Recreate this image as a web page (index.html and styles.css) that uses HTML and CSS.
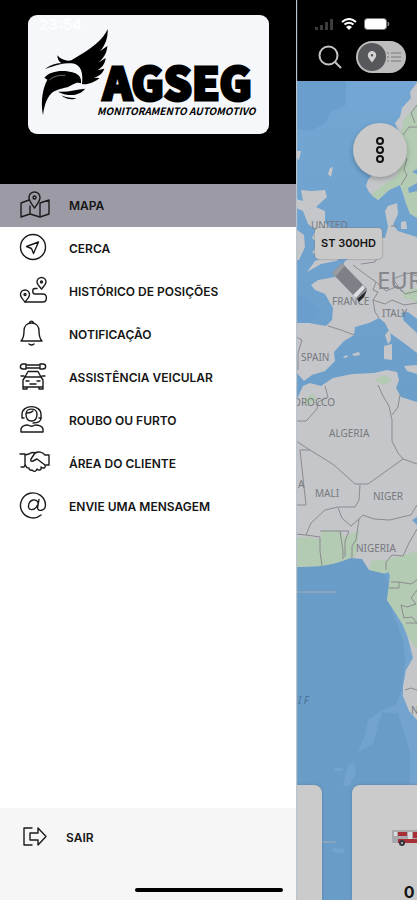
FILE: index.html
```html
<!DOCTYPE html>
<html lang="pt-BR">
<head>
    <meta charset="UTF-8">
    <meta name="viewport" content="width=device-width, initial-scale=1.0">
    <title>AGSEG Monitoramento Automotivo</title>
    <link rel="stylesheet" href="styles.css">
</head>
<body>
    <aside class="drawer">
        <header class="drawer-header">
            <div class="logo">
                <svg class="logo-art" viewBox="0 0 241 119" role="img" aria-label="AGSEG Monitoramento Automotivo">
                    <g transform="translate(-28 -15) scale(.3333)">
                        <path d="M323 87C310 118 278 144 214 181C200 184 184 180 172 166C172 178 178 186 184 190C166 189 148 197 136 207C170 196 180 190 216 190C244 194 250 220 246 252C258 256 285 247 299 234L281 233C296 230 309 219 313 206L292 211C306 203 316 190 317 174L295 188C312 174 321 158 322 138L300 154C316 135 324 114 323 87Z"/>
                        <path class="swoosh" d="M158 208C190 188 228 190 240 208Q246 222 243 240C232 222 204 208 158 208Z"/>
                        <path d="M129 346C121 303 128 266 142 239L133 233C150 212 190 208 222 218C238 224 245 234 243 250C228 244 219 255 202 262C180 267 166 270 153 281C137 299 132 322 129 346Z"/>
                        <path d="M174 275C204 278 228 268 255 266C246 280 224 288 200 284C190 282 182 279 174 275ZM184 286C198 293 212 295 229 294C219 301 196 298 184 286Z"/>
                        <path class="feather" d="M148 240Q165 224 196 226"/>
                    </g>
                    <text class="logo-name" x="75" y="85">AGSEG</text>
                    <text class="logo-tag" x="69" y="100">MONITORAMENTO AUTOMOTIVO</text>
                </svg>
                <span class="clock">23:54</span>
            </div>
        </header>

        <nav class="menu">
            <a class="menu-item active" href="#mapa">
                <svg class="icon" viewBox="0 0 32 32">
                    <path d="M11 10L3 13V27L12 24L22 27L31 24V10L22 13M12 24V16M22 27V13"/>
                    <path d="M16.500 18C13 13 11 11 11 7.500A5.500 5.500 0 0 1 22 7.500C22 11 20 13 16.500 18Z"/>
                    <circle cx="16.500" cy="7.500" r="1.500"/>
                </svg>
                MAPA
            </a>
            <a class="menu-item" href="#cerca">
                <svg class="icon" viewBox="0 0 32 32">
                    <circle cx="15" cy="14" r="12.500"/>
                    <path d="M20.500 9L8.500 13.500L13.500 15.500L15.500 20.500Z"/>
                </svg>
                CERCA
            </a>
            <a class="menu-item" href="#historico">
                <svg class="icon" viewBox="0 0 32 32">
                    <path d="M23.500 13C20 9 19 8 19 6A4.500 4.500 0 0 1 28 6C28 8 27 9 23.500 13ZM7 26C3.500 22 2.500 21 2.500 18.500A4.500 4.500 0 0 1 11.500 18.500C11.500 21 10.500 22 7 26Z"/>
                    <circle cx="23.500" cy="6" r="1"/>
                    <circle cx="7" cy="18.500" r="1"/>
                    <path d="M19 12.500H17C14 12.500 14 18 17 18H25C29.500 18 29.500 26 25 26H7"/>
                </svg>
                HISTÓRICO DE POSIÇÕES
            </a>
            <a class="menu-item" href="#notificacao">
                <svg class="icon" viewBox="0 0 32 32">
                    <path d="M3 22C6 19 6 16 6 12C6 7 9 4 13.500 4S21 7 21 12C21 16 21 19 24 22ZM11.500 4C12 1.500 15 1.500 15.500 4M11 25Q13.500 27 16 25"/>
                </svg>
                NOTIFICAÇÃO
            </a>
            <a class="menu-item" href="#assistencia">
                <svg class="icon" viewBox="0 0 32 32">
                    <path d="M8 2H5C1.500 2 1.500 7 5 7H8M22 2H25C28.500 2 28.500 7 25 7H22M8 2V7M22 2V7M8 3H22M8 6H22"/>
                    <path d="M7 15L10 9.500H20L23 15M5 25V18L7 15H23L25 18V25ZM3 14H6M24 14H27M5 25V27H9V25M21 25V27H25V25M8 19H11M19 19H22M12 22H18"/>
                </svg>
                ASSISTÊNCIA VEICULAR
            </a>
            <a class="menu-item" href="#roubo">
                <svg class="icon" viewBox="0 0 32 32">
                    <path d="M6 13H4V9.500C4 -1 23 -1 23 9.500V13H21"/>
                    <path d="M8 9C8 2.500 19 2.500 19 9C19 13.500 17 16 13.500 16S8 13.500 8 9ZM9 8Q13 8 15 6M23 13C23 17 20 18 15 18M3 27V24C4 20.500 8 20 10 20Q13.500 22.500 17 20C20 20 24 20.500 25 24V27Z"/>
                </svg>
                ROUBO OU FURTO
            </a>
            <a class="menu-item" href="#cliente">
                <svg class="icon" viewBox="0 0 32 32">
                    <path d="M2 6H7V17L6 19H3M7 7L11 6C13 4 15 4 18 5M19 11L15 13Q12 14 13 11L17 5C20 3 25 4 27 7H31V17H28M19 11L27 17C28 20 26 21 23 19C24 22 21 23 19 21C18 24 16 24 14 22C12 23 11 21 11 20C8 21 8 18 7 16"/>
                </svg>
                ÁREA DO CLIENTE
            </a>
            <a class="menu-item" href="#mensagem">
                <svg class="icon" viewBox="0 0 32 32">
                    <path d="M23 24A12.500 12.500 0 1 1 27.500 14C27.500 20 20 21 19.500 17L21 8.500M20 12C19 7 11 8 10.500 15C10 20 17 20 19.500 14"/>
                </svg>
                ENVIE UMA MENSAGEM
            </a>
        </nav>

        <footer class="drawer-footer">
            <a class="logout" href="#sair">
                <svg class="icon icon-exit" viewBox="0 0 26 24">
                    <path d="M10 3H2V20H10M8 8H16V3L24 11.500L16 20V15H8Z"/>
                </svg>
                SAIR
            </a>
        </footer>
    </aside>

    <main class="content">
        <header class="topbar">
            <div class="status">
                <svg class="signal" viewBox="0 0 19 14"><path d="M0 10h3v3H0zM5 8h3v5H5zM10 5h3v8h-3zM15 2h3v11h-3z"/></svg>
                <svg class="wifi" viewBox="0 0 16 12"><path d="M1 4Q8-2 15 4M3.500 6.500Q8 3 12.500 6.500"/><path class="dot" d="M5 9Q8 6 11 9L8 12Z"/></svg>
                <svg class="battery" viewBox="0 0 26 12"><rect x=".5" y=".5" width="22" height="11" rx="3"/><path d="M24 4Q26 6 24 8Z"/></svg>
            </div>
            <div class="tools">
                <button class="search" type="button" aria-label="Buscar">
                    <svg viewBox="0 0 24 24"><circle cx="10.500" cy="10.500" r="9"/><path d="M17 17L23 23"/></svg>
                </button>
                <label class="toggle">
                    <input type="checkbox" aria-label="Mapa ou lista">
                    <span class="knob">
                        <svg viewBox="0 0 12 14"><path d="M6 14C3 9 1 8 1 5A5 5 0 0 1 11 5C11 8 9 9 6 14ZM6 3.500A1.500 1.500 0 1 0 6 6.500A1.500 1.500 0 1 0 6 3.500Z" fill-rule="evenodd"/></svg>
                    </span>
                    <svg class="list" viewBox="0 0 14 12"><path d="M0 2H2M4 2H14M0 6H2M4 6H14M0 10H2M4 10H14"/></svg>
                </label>
            </div>
        </header>

        <section class="map">
            <svg class="map-art" viewBox="296 81 121 819" preserveAspectRatio="xMinYMin slice">
                <!-- sea depth -->
                <path class="deep" d="M296 81H346V105L330 112L326 122L311 131L296 129ZM296 293L304 297L321 310L317 318L308 322H296Z"/>
                <path class="shelf" d="M386 570L392 610L403 640L405 660L402 690L396 704L380 712L368 720L365 735L358 752L373 744L382 712L398 714L410 752V785H430V600ZM348 765L354 762L356 773L349 786H343ZM334 768h9v3h-9zM333 848l12 1l-2 5l-11-2z"/>

                <!-- europe -->
                <path class="land" d="M430 81H418L410 92L411 98L402 108L400 117L395 123L399 132L385 160L368 180L366 186L369 192L378 200L389 190L400 185L405 200L412 214L430 220Z"/>
                <path class="green" d="M430 104L417 104L404 120L400 138L398 175L384 184L371 195L378 200L389 190L400 185L407 203L413 214H430Z"/>
                <path class="water" d="M408 188L417 183V191L409 193ZM412 172l5-3v5z"/>
                <path class="land" d="M296 199L303 201L301 190L312 191L325 190L327 197L316 207L325 211L325 223L333 230L338 242L347 247L344 256L336 261L321 264L307 272L315 261L327 256L312 253L318 244L312 238L316 230L308 224L303 211L296 208Z"/>
                <path class="land" d="M296 229L304 235L305 247L299 260H296ZM330 168L333 167L331 177L328 174ZM297 151L301 151L299 160L297 158Z"/>
                <path class="land" d="M417 237L404 233L398 231L393 225L398 214L397 203L388 206L385 211L388 227L385 238L377 237L365 243L354 256L345 261L341 270L335 277L318 280L311 285L315 290L325 294L333 308L332 320L326 326L309 323H296V372L304 381L312 375L325 371L335 361L334 352L344 341L354 335L355 327L369 323L379 318L385 323L390 333L404 343L417 353V333L404 321L401 313L408 312L417 319H430V237Z"/>
                <path class="land" d="M385 335L390 329L391 340L388 344ZM384 346L392 344L392 360L384 359ZM404 366L417 365V374L407 371ZM343 357l4-2l1 2l-4 1zM352 354l7-2l1 3l-6 1zM401 222l5-1l1 8l-6 0z"/>
                <path class="green" d="M405 201L417 203V218L410 214ZM402 292L417 288V302L404 298Z"/>

                <!-- africa -->
                <path class="land" d="M296 401L303 386L310 383L321 386L333 378L352 374L374 373L387 370L397 372L399 380L396 388L401 397L417 402H430V720H417L409 711L403 696V686L406 670L413 658L408 638L403 625L395 612L387 600L390 588V575L386 570H369L362 559L351 558L336 563L321 566L296 567Z"/>
                <path class="green" d="M296 538L307 537L321 540L321 530L340 531L345 537L359 530L356 556L336 563L321 566L296 567ZM386 560L417 551V650L409 638L403 625L395 612L387 600L390 575L369 570L372 560ZM304 399L313 393L316 400L307 406ZM374 380L385 375L392 380L384 385Z"/>
                <path class="water" d="M384 574l5-2v5l-3 0zM412 520l5-3v8z"/>

                <!-- borders -->
                <path class="border" d="M403 135L409 127H417M417 105L411 113L415 123M407 158L404 170L407 175L401 185"/>
                <path class="border" d="M353 265L362 272L376 282L373 290L378 292L373 300L375 312L379 318M361 264L375 262L380 252L377 241M376 282L386 291L398 286L405 294L417 291M373 300L385 304L392 300L404 305L417 303M328 326L341 330L354 335M296 337L302 340L298 353V370M391 226H397M402 292L393 279L408 273L417 276"/>
                <path class="border" d="M325 386L328 397L318 402L317 409L306 421H296M296 441L310 450L334 465L355 484L368 484L403 459L417 464M310 450H300L306 505H296M378 385L383 396L389 406L392 420V441L398 453L403 459M400 395L398 407L392 415M360 485L359 500L355 507H338L325 510L311 523L306 535L296 534M338 508L342 518L351 526L359 519L363 515L374 519L390 520L402 517L411 515L417 505M359 519L356 540L352 546V558M306 535L320 537L320 551L322 566M320 531H340L343 551V559M340 531L349 531L345 541V557M417 529L409 543L403 556L392 555L386 562V570M391 582H399V588H389M399 582L411 584L417 580M417 590L411 598L416 604L407 607L401 605L404 618L412 617L417 623M406 623H417M405 690L411 688L417 690"/>
                <path class="parallel" d="M296 592H336M322 842H336"/>

                <!-- names -->
                <g class="country">
                    <text x="311" y="229">UNITED</text>
                    <text x="332" y="305">FRANCE</text>
                    <text x="382" y="317">ITALY</text>
                    <text x="301" y="361">SPAIN</text>
                    <text x="284" y="406">MOROCCO</text>
                    <text x="329" y="437">ALGERIA</text>
                    <text x="298" y="488">A</text>
                    <text x="315" y="497">MALI</text>
                    <text x="373" y="500">NIGER</text>
                    <text x="356" y="552">NIGERIA</text>
                    <text x="411" y="714">NAMIBIA</text>
                </g>
                <text class="continent" x="377" y="289">EUROPE</text>
                <text class="ocean" x="298" y="704">I F</text>

                <!-- tracker -->
                <path d="M332 273L342 263L367 289L357 299Z" fill="#7d8187"/>
                <path d="M332 273L342 263L345 266L335 277Z" fill="#989ca1"/>
                <path d="M353 295L363 285L365 288L356 298Z" fill="#dddfe1"/>
                <path d="M357 299L367 290L364 297L359 302Z" fill="#25272a"/>
            </svg>
            <button class="fab" type="button" aria-label="Opções">
                <svg viewBox="0 0 10 28"><circle cx="5" cy="5" r="3"/><circle cx="5" cy="14" r="3"/><circle cx="5" cy="23" r="3"/></svg>
            </button>
            <span class="bubble">ST 300HD</span>
            <div class="cards">
                <article class="card card-prev"></article>
                <article class="card">
                    <svg class="vehicle" viewBox="0 0 48 18">
                        <rect x="0" y="1" width="48" height="13" rx="1" fill="#a9aaad"/>
                        <path d="M6 3h9v4H6zM21 3h9v6h-9zM6 10h42v4H6z" fill="#a92f36"/>
                        <path d="M2 3h3v4H2zM16 3h4v7h-4z" fill="#dadbdd"/>
                        <circle cx="10" cy="14" r="3" fill="#35363c"/><circle cx="10" cy="14" r="1" fill="#ccc"/>
                        <circle cx="38" cy="14" r="3" fill="#35363c"/>
                    </svg>
                    <strong class="speed">0</strong>
                </article>
            </div>
        </section>
    </main>
    <div class="home-bar"></div>
</body>
</html>
```
FILE: styles.css
```css
* {
    box-sizing: border-box;
}

body {
    margin: 0;
    display: flex;
    min-height: 100vh;
    background-color: #000;
    font-family: Inter, "Liberation Sans", sans-serif;
    color: #151515;
    overflow: hidden;
}

a {
    color: inherit;
    text-decoration: none;
}

button {
    padding: 0;
    border: none;
    background: none;
    cursor: pointer;
}

svg {
    display: block;
}

/* Drawer */
.drawer {
    flex: 0 0 71%;
    display: flex;
    flex-direction: column;
    background-color: #fff;
    z-index: 1;
    box-shadow: 1px 0 1px #b9c4cc;
}

.drawer-header {
    padding: 15px 27px 50px 28px;
    background-color: #000;
}

.logo {
    position: relative;
    border-radius: 9px;
    background-color: #f5f7fb;
}

.clock {
    position: absolute;
    top: 1px;
    left: 11px;
    font-size: 15px;
    font-weight: 600;
    line-height: 18px;
    color: #fff;
}

.swoosh {
    fill: #f5f7fb;
}

.feather {
    fill: none;
    stroke: #9da0a4;
    stroke-width: 2;
}

.logo-name {
    font: 900 44px "Noto Sans CJK SC", "DejaVu Sans Condensed", sans-serif;
    stroke: #000;
    stroke-width: 3;
}

.logo-tag {
    font: italic bold 10px "Noto Sans CJK SC", "DejaVu Sans Condensed", sans-serif;
}

.menu {
    flex: 1;
}

.menu-item {
    display: flex;
    align-items: center;
    gap: 19px;
    height: 43px;
    padding-left: 18px;
    font-size: 12px;
    font-weight: 600;
}

.active {
    background-color: #9c9ba5;
}

.icon {
    width: 32px;
    height: 32px;
    fill: none;
    stroke: #1b1b1b;
    stroke-width: 1.4;
    stroke-linejoin: round;
    stroke-linecap: round;
}

.drawer-footer {
    height: 92px;
    padding: 17px 22px;
    background-color: #f6f6f6;
}

.logout {
    display: flex;
    align-items: center;
    gap: 18px;
    font-size: 12px;
    font-weight: 600;
}

.icon-exit {
    width: 26px;
    height: 24px;
}

/* Top bar */
.content {
    flex: 1;
    min-width: 0;
    display: flex;
    flex-direction: column;
}

.topbar {
    padding: 14px 11px 8px;
    background-color: #000;
}

.status {
    display: flex;
    justify-content: flex-end;
    align-items: center;
    gap: 7px;
    height: 20px;
    margin-bottom: 7px;
    padding-right: 16px;
}

.signal {
    width: 19px;
    fill: #3c3c3c;
}

.wifi {
    width: 16px;
    fill: none;
    stroke: #fff;
    stroke-width: 2;
}

.dot {
    fill: #fff;
    stroke: none;
}

.battery {
    width: 26px;
    fill: #fff;
    stroke: #777;
}

.tools {
    display: flex;
    justify-content: flex-end;
    align-items: center;
    gap: 14px;
}

.search svg {
    width: 24px;
    fill: none;
    stroke: #c4c4c4;
    stroke-width: 2;
}

.toggle {
    display: flex;
    align-items: center;
    gap: 1px;
    width: 50px;
    height: 32px;
    padding: 2px;
    border-radius: 16px;
    background-color: #bdbdbd;
}

.toggle input {
    position: absolute;
    opacity: 0;
}

.knob {
    display: flex;
    align-items: center;
    justify-content: center;
    width: 28px;
    height: 28px;
    border-radius: 50%;
    background-color: #56585b;
}

.knob svg {
    width: 10px;
    fill: #d4d4d4;
}

.list {
    width: 14px;
    stroke: #76787b;
    stroke-width: 1;
}

/* Map */
.map {
    position: relative;
    flex: 1;
    background-color: #6b9dc9;
    overflow: hidden;
}

.map-art {
    position: absolute;
    width: 100%;
    height: 100%;
    background: linear-gradient(#73a6d2, #6a9cc8 50%);
}

.deep {
    fill: #6a9ecd;
}

.shelf {
    fill: #73a4cf;
}

.land {
    fill: #c4c6c9;
}

.green {
    fill: #b3cbb2;
}

.water {
    fill: #6fa2d0;
}

.border {
    fill: none;
    stroke: #8b8b90;
    stroke-width: 1;
    stroke-linejoin: round;
}

.parallel {
    stroke: #a3adb4;
}

.country {
    font: 10px "Noto Sans", sans-serif;
    fill: #77797e;
}

.continent {
    font: 24px "Noto Sans", sans-serif;
    fill: #85878c;
}

.ocean {
    font: italic 10px "Noto Sans", sans-serif;
    fill: #4c7297;
}

.fab {
    position: absolute;
    top: 42px;
    right: 10px;
    display: flex;
    align-items: center;
    justify-content: center;
    width: 54px;
    height: 54px;
    border-radius: 50%;
    background-color: #c9c9c9;
    box-shadow: 0 2px 5px rgba(0, 0, 0, 0.25);
}

.fab svg {
    width: 10px;
    fill: none;
    stroke: #111;
    stroke-width: 2;
}

.bubble {
    position: absolute;
    top: 147px;
    left: 19px;
    padding: 7px 6px;
    border-radius: 4px;
    background-color: #c9c9ca;
    box-shadow: 0 0 2px #777;
    font-size: 11px;
    font-weight: 600;
    line-height: 17px;
    white-space: nowrap;
}

.cards {
    position: absolute;
    bottom: 0;
    left: 0;
    display: flex;
    gap: 30px;
}

.card {
    flex: 0 0 240px;
    height: 115px;
    padding: 44px 40px 0;
    border-radius: 8px 8px 0 0;
    background-color: #cbcbcb;
    box-shadow: 0 0 3px rgba(0, 0, 0, 0.2);
}

.card-prev {
    flex-basis: 26px;
    padding: 0;
    border-radius: 0 8px 0 0;
}

.vehicle {
    width: 48px;
}

.speed {
    display: block;
    width: 34px;
    margin-top: 35px;
    text-align: center;
    font-size: 16px;
    line-height: 20px;
}

.home-bar {
    position: fixed;
    bottom: 8px;
    left: 50%;
    width: 148px;
    height: 4px;
    margin-left: -74px;
    border-radius: 2px;
    background-color: #000;
    z-index: 2;
}
```
